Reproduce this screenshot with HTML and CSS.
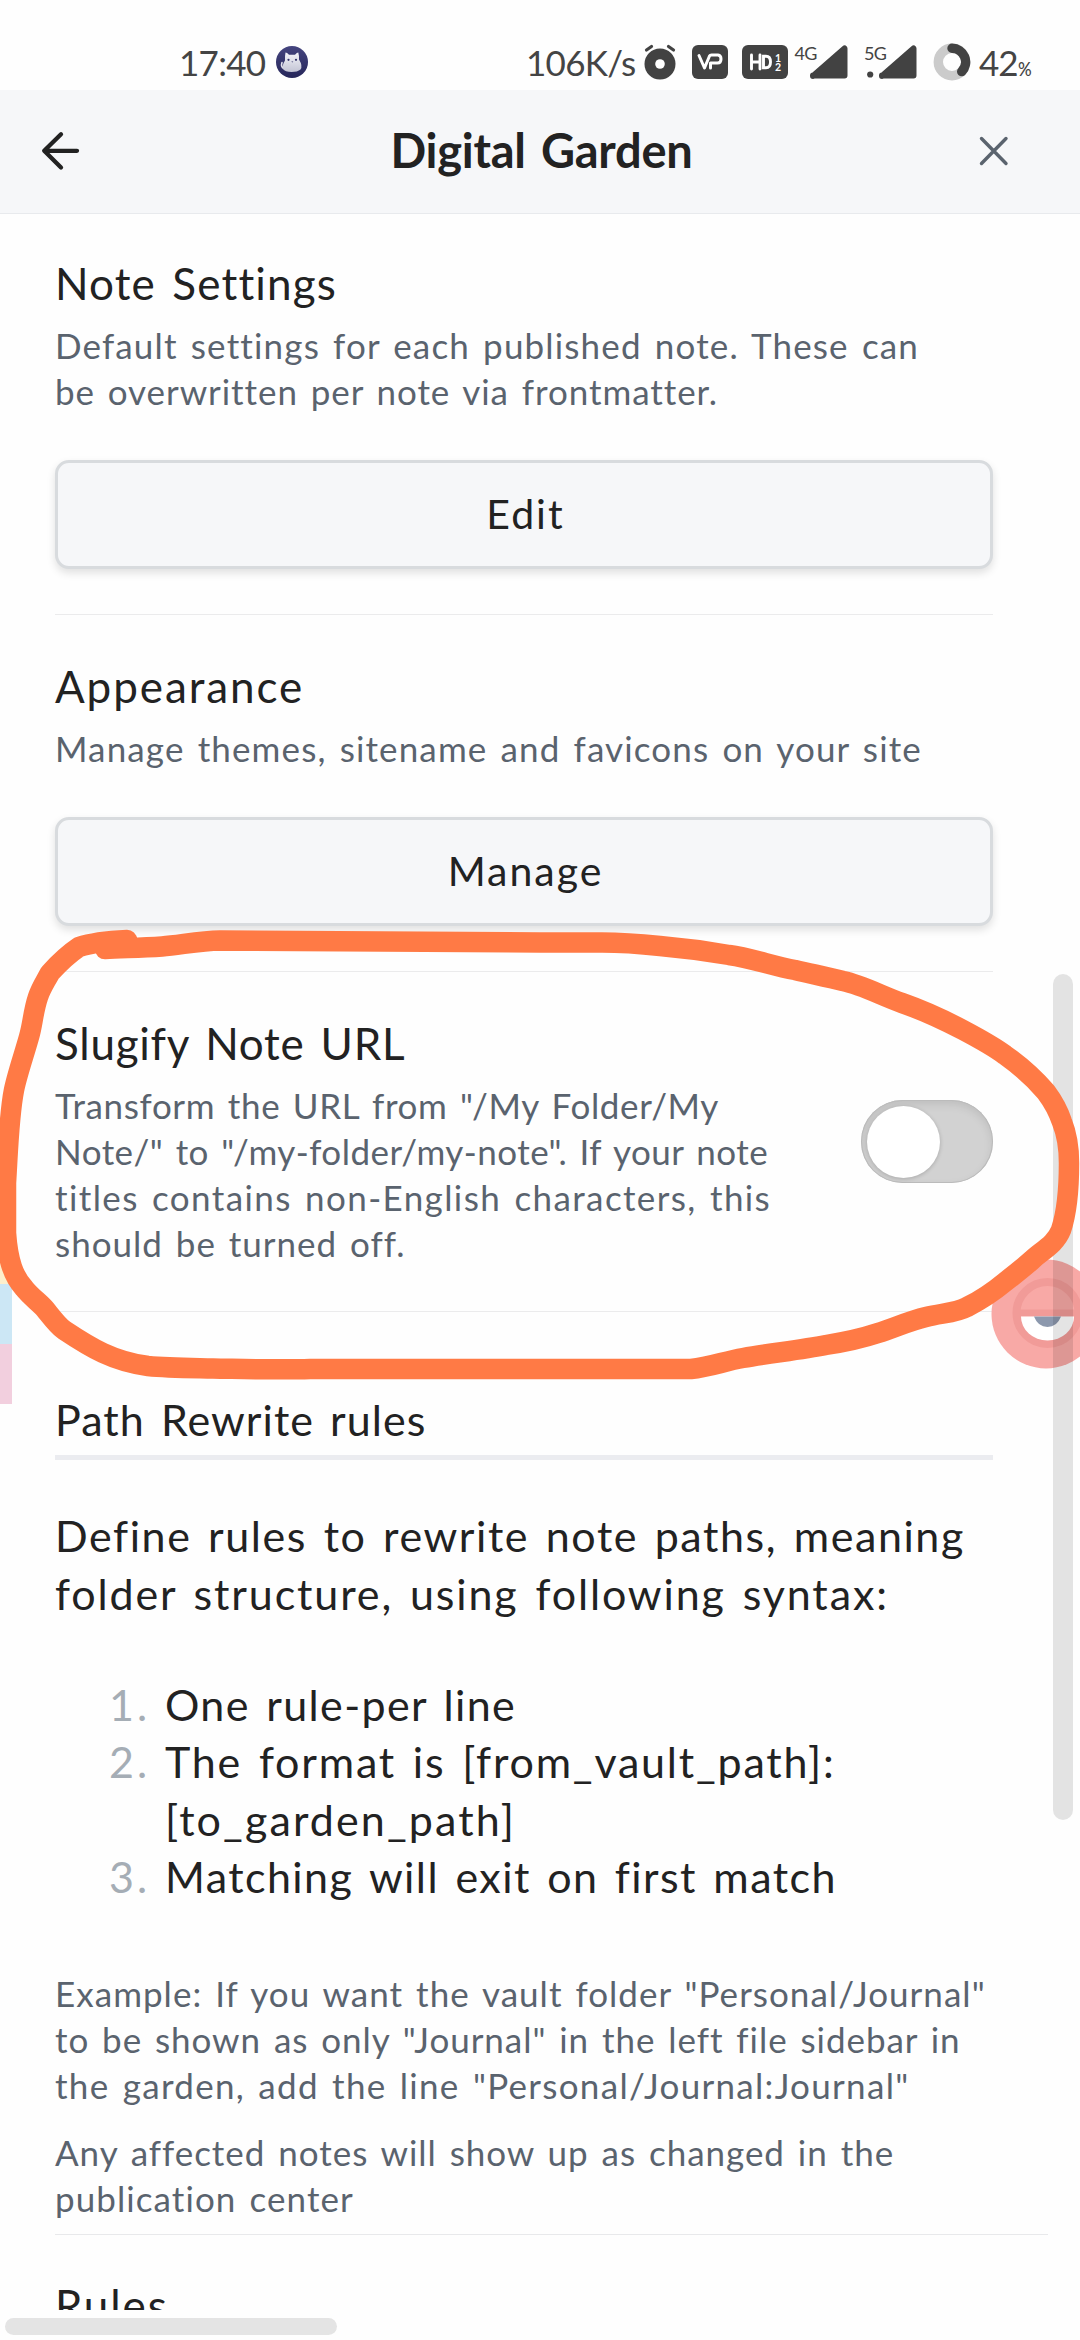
FILE: index.html
```html
<!DOCTYPE html>
<html lang="en">
<head>
<meta charset="utf-8">
<title>Digital Garden</title>
<link rel="stylesheet" href="styles.css">
</head>
<body>
<div class="screen">
  <div class="status">
    <span class="clock">17:40</span>
    <svg class="cat" width="32" height="32" viewBox="0 0 32 32">
      <defs><linearGradient id="fur" x1="0" y1="0" x2="0" y2="1"><stop offset="0" stop-color="#f4f4fa"/><stop offset="1" stop-color="#c3c4d4"/></linearGradient>
      <linearGradient id="night" x1="0" y1="0" x2="0" y2="1"><stop offset="0" stop-color="#45457f"/><stop offset="1" stop-color="#26265a"/></linearGradient></defs>
      <circle cx="16" cy="16" r="16" fill="url(#night)"/>
      <path d="M8 22.500Q4.500 21 6 16.500" fill="none" stroke="#e4e4ee" stroke-width="1.600" stroke-linecap="round"/>
      <path d="M9.500 6.500Q11 6.500 13 8.800H19Q21 6.500 22.300 6.500Q23.300 10 23 13.500Q27 20 24.500 23.500Q21.500 26 15.500 26Q9 26 7 23Q6 19 9 14.500Q8.800 10 9.500 6.500Z" fill="url(#fur)"/>
      <circle cx="12.500" cy="13.800" r="1.100" fill="#33336a"/><circle cx="20" cy="13.800" r="1.100" fill="#33336a"/><path d="M15.300 15.600h2l-1 1z" fill="#33336a"/>
    </svg>
    <span class="speed">106K/s</span>
    <svg class="alarm" width="32" height="36" viewBox="0 0 32 36">
      <circle cx="16" cy="20" r="15.500" fill="#424242"/><circle cx="16" cy="20" r="4.800" fill="#fff"/>
      <path d="M2.500 6L7.500 2.500M29.500 6L24.500 2.500" stroke="#424242" stroke-width="3.200" stroke-linecap="round"/>
    </svg>
    <svg class="vp" width="36" height="34" viewBox="0 0 36 34">
      <rect width="36" height="34" rx="6" fill="#424242"/>
      <path d="M7 10.500L12.500 23L17.500 11Q18 10 19.500 10H26Q29 10.500 29 14Q29 18 25.500 18H18.500V23" fill="none" stroke="#fff" stroke-width="3" stroke-linecap="round" stroke-linejoin="round"/>
    </svg>
    <svg class="hd" width="46" height="34" viewBox="0 0 46 34">
      <rect width="46" height="34" rx="6" fill="#424242"/>
      <path d="M9.500 10V24M18 10V24M9.500 17H18M21.500 11.300H24Q28.500 11.300 28.500 17T24 22.700H21.500Z" fill="none" stroke="#fff" stroke-width="2.900" stroke-linecap="round"/>
      <text class="sim" x="33" y="16.500">1</text><text class="sim" x="33" y="25.500">2</text>
    </svg>
    <span class="net">4G</span>
    <svg class="sig4" width="38" height="34" viewBox="0 0 38 34"><path d="M3 31L34.500 3.500V30.500H3Z" fill="#424242" stroke="#424242" stroke-width="6" stroke-linejoin="round"/></svg>
    <span class="net five">5G</span>
    <svg class="sig5" width="50" height="34" viewBox="0 0 50 34"><circle cx="3.200" cy="29.500" r="3.100" fill="#424242"/><path d="M15 31L46.500 3.500V30.500H15Z" fill="#424242" stroke="#424242" stroke-width="6" stroke-linejoin="round"/></svg>
    <svg class="ring" width="38" height="38" viewBox="0 0 38 38">
      <circle cx="19" cy="19" r="13.700" fill="none" stroke="#cbcbcb" stroke-width="9.400"/>
      <path d="M19 5.300A13.700 13.700 0 0 1 28.700 28.600" fill="none" stroke="#424242" stroke-width="9.400" stroke-linecap="round"/>
    </svg>
    <span class="battery">42</span><span class="percent">%</span>
  </div>

  <header class="header">
    <svg class="back" width="40" height="40" viewBox="0 0 40 40"><path d="M20 3.200L3.200 19.800L20 36.500M3.200 19.800H36" fill="none" stroke="#222" stroke-width="4.300" stroke-linecap="round" stroke-linejoin="round"/></svg>
    <h1>Digital Garden</h1>
    <svg class="close" width="32" height="32" viewBox="0 0 32 32"><path d="M3.500 3.500L28 28.500M28 3.500L3.500 28.500" fill="none" stroke="#5a636e" stroke-width="3.400" stroke-linecap="round"/></svg>
  </header>

  <main class="content">
    <section class="setting first">
      <h2 class="k-settings">Note Settings</h2>
      <p class="desc"><span class="k-default">Default settings for each published note. These can</span><span class="k-over">be overwritten per note via frontmatter.</span></p>
      <button>Edit</button>
    </section>
    <section class="setting">
      <h2 class="k-appearance">Appearance</h2>
      <p class="desc"><span class="k-themes">Manage themes, sitename and favicons on your site</span></p>
      <button>Manage</button>
    </section>
    <section class="setting toggle-row">
      <div>
        <h2 class="k-slugify">Slugify Note URL</h2>
        <p class="desc"><span class="k-transform">Transform the URL from "/My Folder/My</span><span class="k-note">Note/" to "/my-folder/my-note". If your note</span><span class="k-titles">titles contains non-English characters, this</span><span class="k-should">should be turned off.</span></p>
      </div>
      <div class="toggle"><div class="knob"></div></div>
    </section>
    <h3>Path Rewrite rules</h3>
    <p class="intro"><span class="k-define">Define rules to rewrite note paths, meaning</span><span class="k-folder">folder structure, using following syntax:</span></p>
    <ol class="rules">
      <li><b>1.</b><div><span class="k-one">One rule-per line</span></div></li>
      <li><b>2.</b><div><span class="k-format">The format is [from_vault_path]:</span><span class="k-garden">[to_garden_path]</span></div></li>
      <li><b>3.</b><div><span class="k-matching">Matching will exit on first match</span></div></li>
    </ol>
    <p class="desc example"><span class="k-example">Example: If you want the vault folder "Personal/Journal"</span><span class="k-shown">to be shown as only "Journal" in the left file sidebar in</span><span class="k-add">the garden, add the line "Personal/Journal:Journal"</span></p>
    <p class="desc affected"><span class="k-any">Any affected notes will show up as changed in the</span><span class="k-center">publication center</span></p>
    <div class="divider"></div>
    <div class="clip"><h2 class="k-rules">Rules</h2></div>
  </main>

  <div class="edge"><i></i><i></i><i></i></div>
  <svg class="bubble" width="110" height="110" viewBox="0 0 110 110">
    <circle cx="55" cy="55" r="54.500" fill="#f8a9a6"/>
    <circle cx="56.500" cy="54" r="31" fill="none" stroke="#f19b98" stroke-width="8"/>
    <path d="M27 50.500H86V57.500H27Z" fill="#f19b98"/>
    <path d="M30 57.500H83A26.500 24 0 0 1 30 57.500Z" fill="#fff"/>
    <path d="M43 57.500H70Q66 68 56.500 68Q47 68 43 57.500Z" fill="#8c98ad"/>
  </svg>
  <div class="vbar"></div>
  <div class="hbar"></div>
  <svg class="marker" width="1080" height="500" viewBox="0 900 1080 500">
    <path d="M127 940C105 941 91 943 79 947C67 955 59 963 50 973C44 984 41 988 38 997C33 1012 33 1023 29 1037C24 1055 17 1075 14 1090C9 1115 8 1150 6 1183V1233C8 1262 14 1277 24 1288C31 1297 39 1302 45 1309C50 1315 57 1325 64 1330C76 1338 90 1347 103 1353C118 1360 132 1364 148 1366C168 1368 190 1368 213 1368.500C245 1369 280 1370 310 1369H691C710 1367 725 1361 743 1358C772 1353 800 1350 826 1345C845 1342 860 1339 878 1333C894 1328 909 1321 926 1317C942 1313 956 1313 967 1307C981 1300 993 1292 1005 1282C1014 1275 1023 1268 1032 1260C1041 1251 1055 1245 1061 1230C1067 1212 1069 1183 1069 1163C1069 1147 1066 1132 1062 1122C1058 1110 1052 1100 1046 1092C1034 1078 1019 1065 1005 1055C993 1046 980 1039 963 1030C942 1019 922 1010 902 1003C880 995 862 985 843 981C827 977 812 974 795 970C773 966 751 958 729 955C706 951 683 948 660 946C641 944 621 942.500 602 942.500H540C440 942.500 340 940.500 220 940.500C200 941 180 945 162 946.500C140 948 123 948 105 949" fill="none" stroke="#ff7a45" stroke-width="20.500" stroke-linecap="round" stroke-linejoin="round"/>
  </svg>
</div>
</body>
</html>
```
FILE: styles.css
```css
* { box-sizing: border-box; margin: 0; padding: 0; }
body { background: #fefefe; font-family: Lato, sans-serif; color: #222; }
.screen { position: relative; width: 1080px; height: 2340px; overflow: hidden; white-space: nowrap; }
svg { display: block; flex: none; }

/* status bar */
.status { height: 90px; display: flex; align-items: flex-start; color: #444; }
.clock, .speed, .battery { font-size: 35px; line-height: 42px; margin-top: 41px; flex: none; }
.clock { width: 97px; margin-left: 179px; letter-spacing: -0.7px; }
.cat { margin-top: 46px; }
.speed { width: 118px; margin-left: 218px; letter-spacing: -0.7px; }
.alarm { margin-top: 44px; }
.vp { margin: 45px 0 0 16px; }
.hd { margin: 45px 0 0 13.500px; }
.sim { font: bold 10.500px Lato, sans-serif; fill: #fff; }
.net { width: 22px; margin: 43px 0 0 7px; font-size: 18px; line-height: 20px; letter-spacing: -0.6px; flex: none; }
.sig4 { margin: 45px 0 0 -6.500px; }
.five { margin-left: 16px; }
.sig5 { width: 50px; margin: 45px 0 0 -19px; }
.ring { margin: 43px 0 0 16px; }
.battery { width: 39px; margin-left: 8px; letter-spacing: -1px; }
.percent { font-size: 20px; line-height: 24px; margin-top: 55.500px; width: 14px; font-weight: 500; transform: scaleX(.85); transform-origin: left; }

/* header */
.header { height: 124px; padding: 0 70px 0 41px; display: flex; align-items: center; justify-content: space-between; background: #f6f7f9; border-bottom: 1px solid #e8eaed; }
.back, .close { margin-bottom: 2px; }
h1 { font-size: 47px; line-height: 58px; letter-spacing: -0.24px; word-spacing: 4px; margin: -4px 0 0 24px; }

/* settings */
.content { padding-left: 55px; }
.setting { width: 938px; padding: 42px 0 45px; border-bottom: 1px solid #ebebec; }
.first { padding-top: 40px; }
h2 { font-size: 44px; line-height: 58px; font-weight: 400; word-spacing: 4px; }
.desc { font-size: 35px; line-height: 45.750px; color: #5a636e; word-spacing: 3px; }
.setting .desc { margin-top: 11px; }
p span, li span { display: block; }
button { display: block; width: 938px; height: 109px; margin-top: 45.500px; padding: 0 0 3px 3px; font: 41px Lato, sans-serif; letter-spacing: 2px; color: #222; background: #f6f7f9; border: 3px solid #d8dbde; border-radius: 14px; box-shadow: 0 4px 8px rgba(0, 0, 0, .12); }
.toggle-row { display: flex; justify-content: space-between; align-items: center; }
.toggle { width: 132px; height: 83px; margin-top: 3px; padding: 5.500px; border-radius: 42px; background: #d2d2d2; box-shadow: inset 0 0 0 1px #bbb, inset 0 4px 10px rgba(0, 0, 0, .1); }
.knob { width: 73px; height: 72px; border-radius: 50%; background: #fff; box-shadow: 0 1px 4px rgba(0, 0, 0, .2); }

/* path rewrite rules */
h3 { width: 938px; padding: 78.500px 0 6.500px; font-size: 43px; line-height: 58px; font-weight: 400; letter-spacing: 1.050px; word-spacing: 4px; border-bottom: 5px solid #ebecf0; }
.intro { margin-top: 47px; }
.intro, .rules { font-size: 43px; line-height: 57.400px; word-spacing: 4px; }
.rules { margin-top: 54px; list-style: none; }
li { display: flex; padding-left: 54px; }
li b { width: 56px; font-weight: 400; letter-spacing: 3px; color: #a5adb5; }
.example { margin-top: 64.500px; line-height: 46px; }
.affected { margin-top: 21px; line-height: 46px; }
.divider { width: 993px; height: 1px; margin-top: 12.500px; background: #e8e9eb; }
.clip { height: 75px; padding-top: 41px; overflow: hidden; }

/* tracking of each line of copy */
.k-settings { letter-spacing: 1.150px; }
.k-default { letter-spacing: 1.160px; }
.k-over { letter-spacing: .930px; }
.k-appearance { letter-spacing: 1.910px; }
.k-themes { letter-spacing: 1.140px; }
.k-slugify { letter-spacing: .750px; }
.k-transform { letter-spacing: .640px; }
.k-note { letter-spacing: .470px; }
.k-titles { letter-spacing: 1.390px; }
.k-should { letter-spacing: .990px; }
.k-define { letter-spacing: 1.580px; }
.k-folder { letter-spacing: 1.870px; }
.k-one { letter-spacing: 1.370px; }
.k-format { letter-spacing: 1.800px; }
.k-garden { letter-spacing: 2.120px; }
.k-matching { letter-spacing: 1.430px; }
.k-example { letter-spacing: 1.030px; }
.k-shown { letter-spacing: .950px; }
.k-add { letter-spacing: 1.300px; }
.k-any { letter-spacing: .970px; }
.k-center { letter-spacing: 1.080px; }
.k-rules { letter-spacing: 2px; }

/* overlays */
.edge { position: absolute; left: 0; top: 1224px; width: 12px; }
.edge i { display: block; height: 60px; background: #fdefcc; }
.edge i:nth-child(2) { background: #cce7f5; }
.edge i:nth-child(3) { background: #f2cfde; }
.bubble { position: absolute; left: 991px; top: 1259px; }
.vbar { position: absolute; left: 1053px; top: 974px; width: 20px; height: 846px; border-radius: 10px; background: rgba(0, 0, 0, .105); }
.hbar { position: absolute; left: 5px; top: 2318px; width: 332px; height: 17px; border-radius: 9px; background: #e4e4e4; }
.marker { position: absolute; left: 0; top: 900px; }
```
